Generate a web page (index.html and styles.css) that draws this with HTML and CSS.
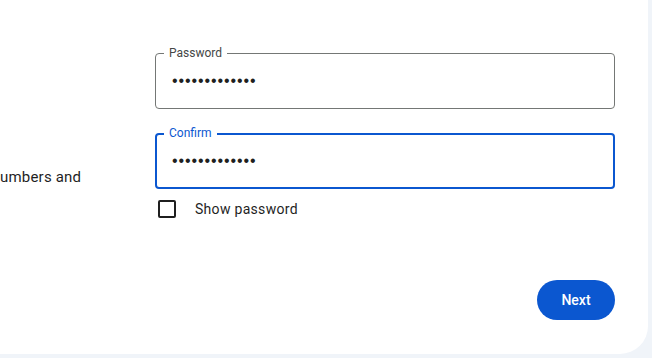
FILE: index.html
```html
<!DOCTYPE html>
<html>
<head>
<meta charset="utf-8">
<link rel="stylesheet" href="styles.css">
</head>
<body>
<div class="card">
  <div class="left">
    <p class="hint">umbers and</p>
  </div>
  <div class="right">
    <div class="field">
      <span class="label">Password</span>
      <span class="dots">•••••••••••••</span>
    </div>
    <div class="field focused">
      <span class="label">Confirm</span>
      <span class="dots">•••••••••••••</span>
    </div>
    <div class="check-row">
      <span class="box"></span>
      <span class="check-text">Show password</span>
    </div>
    <div class="actions">
      <button class="next">Next</button>
    </div>
  </div>
</div>
</body>
</html>
```
FILE: styles.css
```css
html, body {
  margin: 0;
  padding: 0;
  background: #f0f4f9;
  font-family: Roboto, "Liberation Sans", Arial, sans-serif;
  color: #1f1f1f;
}
.card {
  width: 648px;
  height: 354px;
  background: #fff;
  border-bottom-right-radius: 28px;
  display: flex;
  overflow: hidden;
}
.left {
  width: 155px;
  flex: none;
  padding-top: 167px;
  box-sizing: border-box;
}
.hint {
  margin: 0;
  font-size: 15px;
  letter-spacing: 0.2px;
  line-height: 20px;
  white-space: nowrap;
}
.right {
  width: 460px;
  flex: none;
  padding-top: 53px;
  display: flex;
  flex-direction: column;
}
.field {
  position: relative;
  height: 56px;
  box-sizing: border-box;
  border: 1px solid #747775;
  border-radius: 4px;
  display: flex;
  align-items: center;
  padding-left: 16px;
}
.field + .field {
  margin-top: 24px;
}
.field.focused {
  border: 2px solid #0b57d0;
  padding-left: 15px;
}
.label {
  position: absolute;
  top: -9px;
  left: 8px;
  padding: 0 5px;
  background: #fff;
  font-size: 12px;
  line-height: 16px;
  color: #444746;
}
.focused .label {
  top: -10px;
  left: 7px;
  color: #0b57d0;
}
.dots {
  font-family: "Liberation Sans", Arial, sans-serif;
  font-size: 16px;
  letter-spacing: 0.9px;
  line-height: 20px;
  color: #1f1f1f;
}
.check-row {
  margin-top: 11px;
  display: flex;
  align-items: center;
  height: 18px;
  padding-left: 3px;
}
.box {
  width: 18px;
  height: 18px;
  box-sizing: border-box;
  border: 2px solid #1f1f1f;
  border-radius: 2px;
}
.check-text {
  margin-left: 19px;
  font-size: 14px;
  letter-spacing: 0.3px;
  line-height: 20px;
}
.actions {
  margin-top: 62px;
  display: flex;
  justify-content: flex-end;
}
.next {
  width: 78px;
  height: 40px;
  border: none;
  border-radius: 20px;
  background: #0b57d0;
  color: #fff;
  font-family: Roboto, "Liberation Sans", Arial, sans-serif;
  font-size: 14px;
  font-weight: 500;
  padding: 0;
}
```
